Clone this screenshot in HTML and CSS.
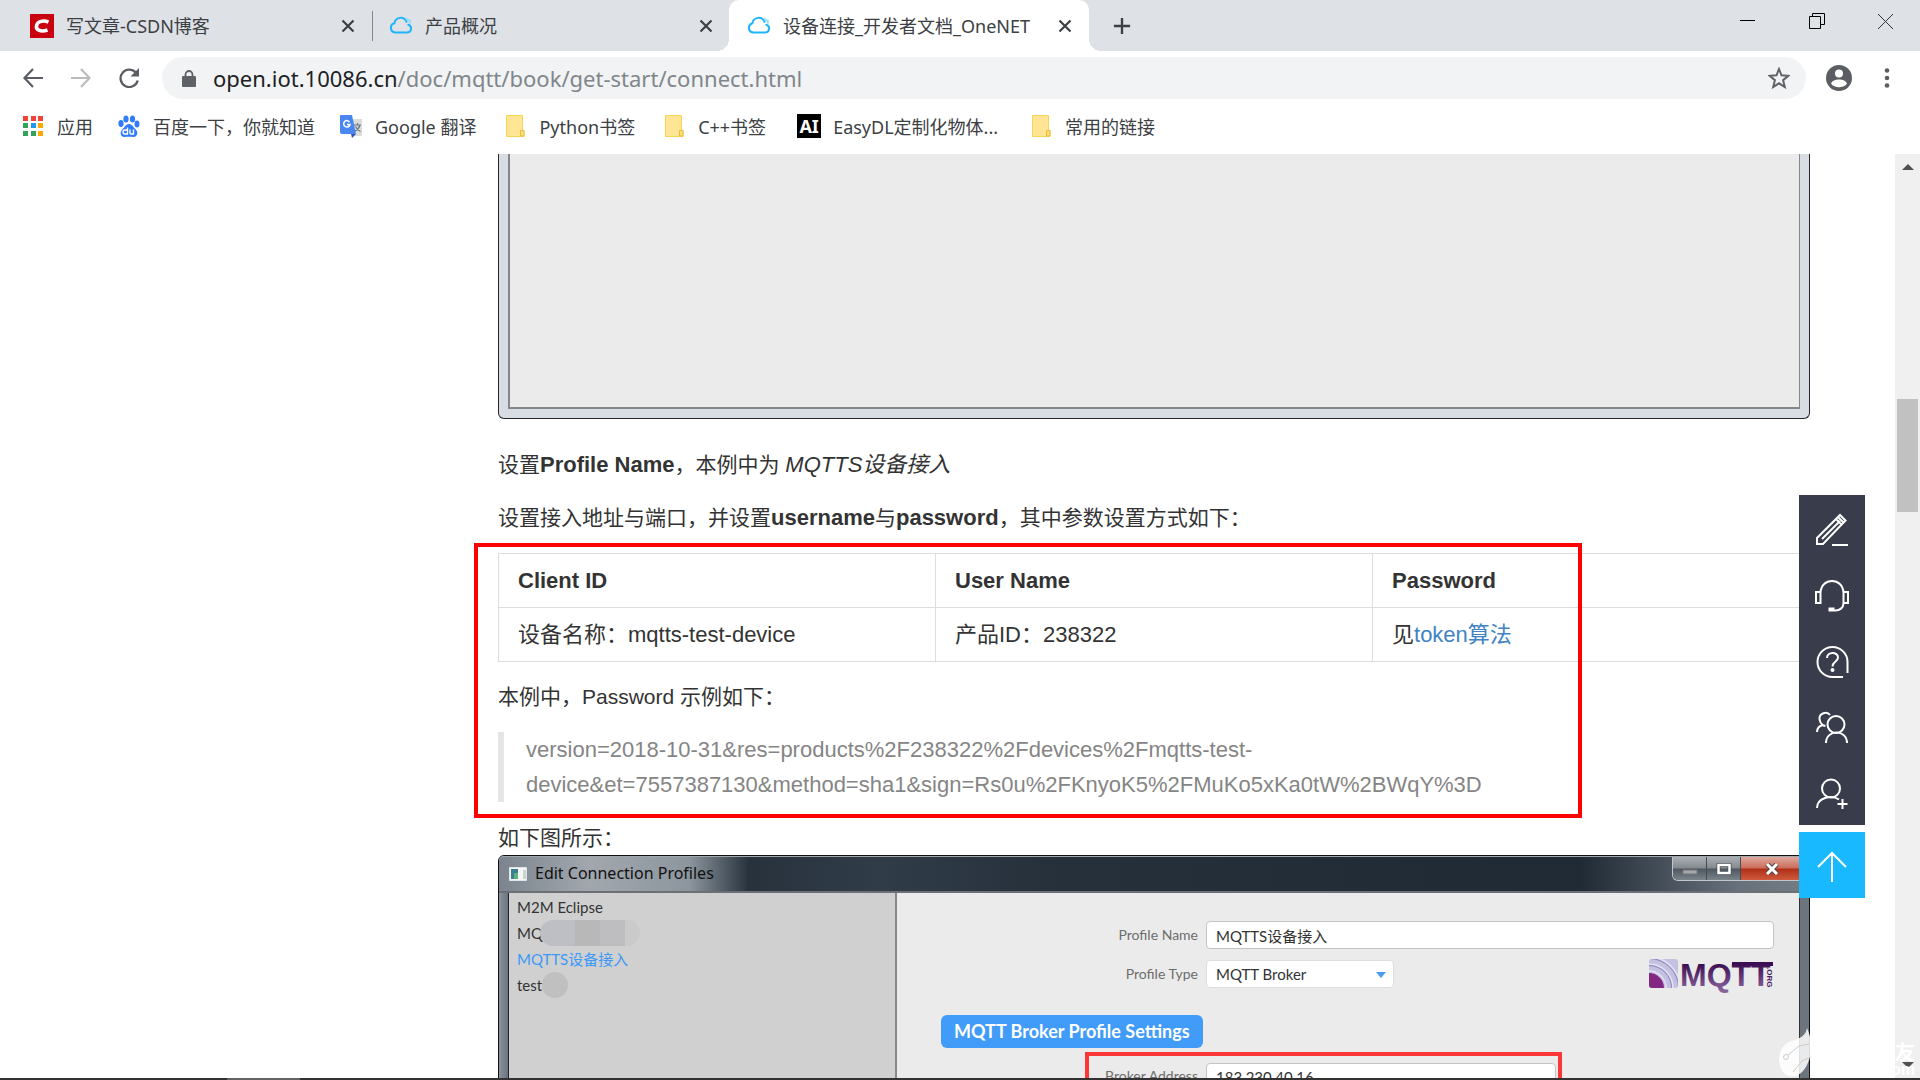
FILE: index.html
```html
<!DOCTYPE html>
<html lang="zh-CN">
<head>
<meta charset="utf-8">
<title>设备连接_开发者文档_OneNET</title>
<link rel="stylesheet" href="styles.css">
</head>
<body>
<svg class="defs" width="0" height="0" aria-hidden="true">
  <symbol id="cloud" viewBox="0 0 24 18"><path d="M6 16.500a4.700 4.700 0 0 1-.6-9.200 6.300 6.300 0 0 1 12.100-1.500M6 16.500h12.500a4 4 0 0 0 .8-7.800" fill="none" stroke="#1fb5f8" stroke-width="2" stroke-linecap="round"/><path d="M17 2.500l2.500 2M20.500 3.500l.5 4" stroke="#8fdcff" stroke-width="2"/></symbol>
  <symbol id="cross" viewBox="0 0 20 20"><path d="M4.500 4.500l11 11M15.500 4.500l-11 11" stroke="#3c4043" stroke-width="2.200"/></symbol>
  <symbol id="folder" viewBox="0 0 24 24"><path d="M3.500 1.500h16v15h1.500v6H3.500z" fill="#ffe594" stroke="#f7d455"/><path d="M17.500 22v-5.500h3.500V22z" fill="#ffe07a" stroke="#e9bd3a"/></symbol>
</svg>

<header class="browser">
  <nav class="tabs" aria-label="标签页">
    <div class="tab tab-first">
      <svg class="favicon" viewBox="0 0 24 24"><path fill="#c8000f" d="M0 0h24v24H0z"/><path d="M18.500 8.200c-5-2.400-11-1-12 3.500-.8 4.600 4.500 6.500 11 4.300" fill="none" stroke="#fff" stroke-width="3.600"/></svg>
      <span class="tab-title">写文章-CSDN博客</span>
      <button class="tab-close" aria-label="关闭"><svg><use href="#cross"/></svg></button>
    </div>
    <div class="tab tab-second">
      <svg class="favicon" viewBox="0 0 24 24"><use href="#cloud" width="24" height="18" y="2"/></svg>
      <span class="tab-title">产品概况</span>
      <button class="tab-close" aria-label="关闭"><svg><use href="#cross"/></svg></button>
    </div>
    <div class="tab tab-active">
      <svg class="favicon" viewBox="0 0 24 24"><use href="#cloud" width="24" height="18" y="2"/></svg>
      <span class="tab-title">设备连接_开发者文档_OneNET</span>
      <button class="tab-close" aria-label="关闭"><svg><use href="#cross"/></svg></button>
    </div>
    <button class="new-tab" aria-label="新标签页"><svg viewBox="0 0 20 20"><path d="M10 1v18M1 10h18" stroke="#3c4043" stroke-width="2.600"/></svg></button>
    <div class="window-buttons">
      <button aria-label="最小化"><svg viewBox="0 0 16 16"><path d="M0 7.500h15" stroke="#000"/></svg></button>
      <button aria-label="还原"><svg viewBox="0 0 16 16"><path d="M.5 3.500h11v12H.5zM3.500 3.500v-3h12v11h-4" fill="none" stroke="#000"/></svg></button>
      <button aria-label="关闭窗口"><svg viewBox="0 0 16 16"><path d="M0 1l15 15M15 1L0 16" stroke="#333"/></svg></button>
    </div>
  </nav>

  <div class="toolbar">
    <button class="nav-button" aria-label="后退"><svg viewBox="0 0 20 20"><path d="M20 10H2M10 1L1.500 10l8.500 9" fill="none" stroke="#5a5e63" stroke-width="2.200"/></svg></button>
    <button class="nav-button" aria-label="前进"><svg viewBox="0 0 20 20"><path d="M0 10h18M10 1l8.500 9-8.500 9" fill="none" stroke="#babcbe" stroke-width="2.200"/></svg></button>
    <button class="nav-button" aria-label="刷新"><svg viewBox="0 0 20 20"><path d="M17.500 5.500a8.700 8.700 0 1 0 1.200 7" fill="none" stroke="#5a5e63" stroke-width="2.300"/><path d="M20 0v8.500h-8.500z" fill="#5a5e63"/></svg></button>
    <div class="omnibox">
      <svg class="lock" viewBox="0 0 14 17"><path d="M1 6h12q1 0 1 1v9q0 1-1 1H1q-1 0-1-1V7q0-1 1-1z" fill="#5f6368"/><path d="M3.500 7V4.500a3.500 3.500 0 0 1 7 0V7" fill="none" stroke="#5f6368" stroke-width="1.800"/></svg>
      <div class="url"><span class="url-host">open.iot.10086.cn</span>/doc/mqtt/book/get-start/connect.html</div>
      <button class="star" aria-label="收藏"><svg viewBox="0 0 22 22"><path d="M11 2l2.500 6.300 6.800.5-5.200 4.400 1.700 6.800-5.800-3.700L5.200 20l1.700-6.800L1.700 8.800l6.800-.5z" fill="none" stroke="#5f6368" stroke-width="2"/></svg></button>
    </div>
    <button class="account" aria-label="用户"><svg viewBox="0 0 26 26"><circle cx="13" cy="13" r="13" fill="#5a5e63"/><circle cx="13" cy="8.500" r="4" fill="#fff"/><path d="M5 18.500c2-5.500 14-5.500 16 0-3 5-13 5-16 0z" fill="#fff"/></svg></button>
    <button class="menu" aria-label="菜单"><svg viewBox="0 0 6 20"><g fill="#5a5e63"><circle cx="3" cy="2.500" r="2.300"/><circle cx="3" cy="10" r="2.300"/><circle cx="3" cy="17.500" r="2.300"/></g></svg></button>
  </div>

  <nav class="bookmarks" aria-label="书签">
    <a href="#apps"><svg viewBox="0 0 24 24"><path fill="#f44336" d="M2 2h5v5H2zM10 2h5v5h-5zM17 2h5v5h-5z"/><path fill="#33a457" d="M2 9h5v5H2zM2 17h5v5H2zM10 17h5v5h-5z"/><path fill="#2196f3" d="M10 9h5v5h-5z"/><path fill="#ffa800" d="M17 9h5v5h-5zM17 17h5v5h-5z"/></svg>应用</a>
    <a href="#baidu"><svg viewBox="0 0 24 24"><g fill="#2e7cf6"><ellipse cx="4" cy="9.500" rx="2.600" ry="3.400"/><ellipse cx="9" cy="5" rx="2.600" ry="3.600"/><ellipse cx="15.500" cy="5" rx="2.600" ry="3.600"/><ellipse cx="20" cy="10" rx="2.500" ry="3.400"/><path d="M12 10c3 0 4 3 6.500 5.200 3.500 3 1.500 8-2 7.800-3-.5-6-.5-9 0-3.500.2-5.500-4.500-2-7.800C8 13 9 10 12 10z"/></g><path d="M10.500 13.500v6.500H8a1.800 1.800 0 0 1 0-4h2.500M13 15.500v3.500q0 1 1 1h2.500v-4.500" fill="none" stroke="#fff" stroke-width="1.400"/></svg>百度一下，你就知道</a>
    <a href="#translate"><svg viewBox="0 0 24 24"><path d="M9 5h14v17H13z" fill="#dcdcdc"/><path d="M1 2q0-1 1-1h11l4 19H3q-2 0-2-2z" fill="#4a86f0"/><path d="M12 20h5l-4 4z" fill="#3056b0"/><path d="M10.500 8a3.200 3.200 0 1 0 .5 2.500H8" fill="none" stroke="#fff" stroke-width="1.500"/><path d="M15 11h7M18.500 9v2M21 11q-1 4-5 6M16.500 12.500q2 4 5 5" stroke="#687984" fill="none" stroke-width="1.200"/></svg>Google 翻译</a>
    <a class="bookmark-folder" href="#python"><svg><use href="#folder"/></svg>Python书签</a>
    <a class="bookmark-folder" href="#cpp"><svg><use href="#folder"/></svg>C++书签</a>
    <a class="bookmark-easydl" href="#easydl"><span class="ai-badge">AI</span>EasyDL定制化物体...</a>
    <a class="bookmark-easydl" href="#links"><svg><use href="#folder"/></svg>常用的链接</a>
  </nav>
</header>

<div class="viewport">
  <main class="article">
    <div class="window-bottom"><div class="window-bottom-pane"></div></div>

    <p>设置<strong>Profile Name</strong>，本例中为 <em>MQTTS设备接入</em></p>
    <p>设置接入地址与端口，并设置<strong>username</strong>与<strong>password</strong>，其中参数设置方式如下：</p>

    <section class="credentials">
      <table>
        <thead><tr><th scope="col">Client ID</th><th scope="col">User Name</th><th scope="col">Password</th></tr></thead>
        <tbody><tr><td>设备名称：mqtts-test-device</td><td>产品ID：238322</td><td>见<a href="#token">token算法</a></td></tr></tbody>
      </table>
      <p>本例中，Password 示例如下：</p>
      <blockquote>version=2018-10-31&amp;res=products%2F238322%2Fdevices%2Fmqtts-test-<br>device&amp;et=7557387130&amp;method=sha1&amp;sign=Rs0u%2FKnyoK5%2FMuKo5xKa0tW%2BWqY%3D</blockquote>
      <div class="highlight"></div>
    </section>

    <div class="illustration">
      <p>如下图所示：</p>
      <div class="profiles">
        <div class="titlebar">
          <svg class="title-icon" viewBox="0 0 18 14"><path fill="#f4f6f6" stroke="#dfe5e8" d="M.5.5h17v13H.5z"/><path fill="#397f92" d="M2 2h7v10H2z"/><path fill="#5fb27c" d="M5 6h4v6H5z"/><path fill="#c8d6d2" d="M14 3h3v9h-3z"/></svg>
          <span class="window-title">Edit Connection Profiles</span>
          <div class="aero-buttons">
            <button class="aero-min" aria-label="Minimize"><svg viewBox="0 0 16 12"><path d="M1 7h14v4H1z" fill="#a5a7a9" stroke="#777"/></svg></button>
            <button class="aero-max" aria-label="Maximize"><svg viewBox="0 0 16 12"><path d="M2.500 2h11v8h-11z" fill="none" stroke="#4b5058" stroke-width="4"/><path d="M2.500 2h11v8h-11z" fill="none" stroke="#fff" stroke-width="2.500"/></svg></button>
            <button class="aero-close" aria-label="Close"><svg viewBox="0 0 16 12"><path d="M3 1l10 10M13 1L3 11" stroke="#544" stroke-width="5"/><path d="M3 1l10 10M13 1L3 11" stroke="#fff" stroke-width="3"/></svg></button>
          </div>
        </div>
        <div class="profiles-body">
          <ul class="profile-list">
            <li>M2M Eclipse</li>
            <li>MQ<span class="smudge smudge-wide"></span></li>
            <li class="selected">MQTTS设备接入</li>
            <li>test<span class="smudge smudge-round"></span></li>
          </ul>
          <form class="profile-form">
            <div class="field">
              <label for="profile-name">Profile Name</label>
              <input id="profile-name" type="text" value="MQTTS设备接入">
            </div>
            <div class="field field-type">
              <label for="profile-type">Profile Type</label>
              <div class="select-wrap">
                <select id="profile-type"><option>MQTT Broker</option></select>
                <svg viewBox="0 0 10 6"><path d="M0 0h10L5 6z" fill="#4a9cf0"/></svg>
              </div>
              <svg class="mqtt-logo" viewBox="0 0 126 34">
                <defs>
                  <linearGradient id="purple" x1="0" y1="0" x2="0" y2="1"><stop offset=".2" stop-color="#3c0f52"/><stop offset=".9" stop-color="#87609a"/></linearGradient>
                  <clipPath id="tile"><rect x="1" y="2" width="29" height="29" rx="3"/></clipPath>
                </defs>
                <g clip-path="url(#tile)"><path fill="#c3c0e0" d="M0 0h30v32H0z"/><g fill="none" stroke="#e4e2f4" stroke-width="1.500"><circle cx="1" cy="31" r="17"/><circle cx="1" cy="31" r="24"/><circle cx="1" cy="31" r="31"/></g><g fill="none" stroke="#8a86bd"><circle cx="1" cy="31" r="22.500"/><circle cx="1" cy="31" r="29.500"/></g><circle cx="1" cy="31" r="15" fill="#842783"/></g>
                <path d="M84 5h41v4H84z" fill="#3c0f52"/>
                <text x="32" y="29" class="mqtt-word" fill="url(#purple)">MQTT</text>
                <text class="mqtt-org" transform="translate(119 10) rotate(90)" fill="#4b1c62">.ORG</text>
              </svg>
            </div>
            <h2>MQTT Broker Profile Settings</h2>
            <div class="field broker">
              <label for="broker-address">Broker Address</label>
              <input id="broker-address" type="text" value="183.230.40.16">
            </div>
          </form>
        </div>
      </div>
    </div>
  </main>

  <div class="scrollbar" aria-hidden="true">
    <svg class="scroll-up" viewBox="0 0 12 6"><path d="M0 6h12L6 0z" fill="#505050"/></svg>
    <div class="scroll-thumb"></div>
    <svg class="scroll-down" viewBox="0 0 12 6"><path d="M0 0h12L6 6z" fill="#505050"/></svg>
  </div>

  <aside class="floating-tools">
    <div class="tool-group">
      <button aria-label="编辑"><svg viewBox="0 0 34 34"><path d="M2 31v-6L25 2l5.500 5.500L8 31zM21 6l6 6M7 26L25 8M23 4l6 6M17 32h16" /></svg></button>
      <button aria-label="客服"><svg viewBox="0 0 34 34"><path d="M5.500 13.500C6 6 11 2 17 2s11 4 11.500 11.500M1 13h4.500v11H1zM28.500 13H33v11h-4.500zM28.500 24c0 5-4 7.500-8 7.500h-6v-2h5"/></svg></button>
      <button aria-label="帮助"><svg viewBox="0 0 34 34"><path d="M28 32H17.500A15 15 0 1 1 32.500 17v11M12 13c0-6.500 11-6.500 11-.5 0 4-5.500 4-5.500 9"/><circle cx="17.500" cy="25" r="1"/></svg></button>
      <button aria-label="社区"><svg viewBox="0 0 34 34"><circle cx="21" cy="13.500" r="8.500"/><path d="M11 32c0-14 21-14 21 0M15 4C12 0 4 2 4.500 8c0 3 1 4 3 6-3 1-5.500 3-5.500 7M7.500 14c1 .5 2 1 3 .8"/></svg></button>
      <button aria-label="注册"><svg viewBox="0 0 34 34"><circle cx="16" cy="11.500" r="9"/><path d="M2 31c0-10 14-14 22-8.500M27.500 22v10M22.500 27h10"/></svg></button>
    </div>
    <button class="to-top" aria-label="返回顶部"><svg viewBox="0 0 34 34"><path d="M17 32V3M3 17L17 3l14 14"/></svg></button>
  </aside>

  <div class="watermark" aria-hidden="true">
    <svg viewBox="0 0 34 50"><path d="M28 0c6 12 6 32-4 43-5 6-13 7-18 3-9-8-7-25 2-31 6-4 18-3 20-15z" fill="#fff" fill-opacity=".85"/><path d="M9 27L20 18l10-2M14 44l9-11 9-4" fill="none" stroke="#ccc"/><circle cx="7" cy="29" r="2.500" fill="none" stroke="#ccc"/></svg>
    <div class="watermark-text">电子发烧友<small>.com</small></div>
  </div>
</div>
<footer class="taskbar"><div class="taskbar-item"></div></footer>
</body>
</html>
```
FILE: styles.css
```css
* { box-sizing: border-box; }

body {
  margin: 0;
  height: 100vh;
  display: flex;
  flex-direction: column;
  overflow: hidden;
  background: #fff;
  color: #333;
  font-family: "Liberation Sans", "Noto Sans CJK SC", sans-serif;
  font-size: 21px;
}

button {
  border: 0;
  padding: 0;
  background: none;
  display: flex;
  align-items: center;
  justify-content: center;
}

p, ul, h2, blockquote { margin: 0; padding: 0; }
.defs { position: absolute; }

/* Browser chrome */
.browser {
  flex: none;
  font-family: "Noto Sans", "Noto Sans CJK SC", sans-serif;
  font-size: 18px;
  color: #3c4043;
}

.tabs {
  display: flex;
  height: 51px;
  background: #dee1e6;
}

.tab {
  display: flex;
  align-items: center;
  gap: 12px;
  width: 360px;
  padding: 0 14px 0 18px;
}
.tab-first { width: 372px; padding-left: 30px; }
.tab-second { width: 357px; padding: 0 13px 0 17px; position: relative; }
.tab-second::before {
  content: "";
  position: absolute;
  left: 0;
  top: 11px;
  width: 1px;
  height: 30px;
  background: #85888c;
}
.tab-active {
  position: relative;
  background: #fff;
  border-radius: 10px 10px 0 0;
}
.tab-active::before,
.tab-active::after {
  content: "";
  position: absolute;
  bottom: 0;
  width: 12px;
  height: 12px;
}
.tab-active::before {
  left: -12px;
  background: radial-gradient(circle at 0 0, transparent 12px, #fff 12px);
}
.tab-active::after {
  right: -12px;
  background: radial-gradient(circle at 100% 0, transparent 12px, #fff 12px);
}
.favicon { flex: none; width: 24px; height: 24px; }
.tab-title { flex: 1; padding-bottom: 2px; white-space: nowrap; }
.tab-close, .tab-close svg { width: 20px; height: 20px; }
.new-tab { width: 66px; }
.new-tab svg { width: 18px; height: 18px; }

.window-buttons { display: flex; margin-left: auto; }
.window-buttons button { width: 69px; height: 42px; }
.window-buttons svg { width: 16px; height: 16px; }

.toolbar {
  display: flex;
  align-items: center;
  height: 54px;
  padding: 0 20px 0 9px;
}
.nav-button { width: 48px; height: 42px; }
.nav-button svg { width: 20px; height: 20px; }
.omnibox {
  flex: 1;
  display: flex;
  align-items: center;
  height: 42px;
  margin-left: 9px;
  padding: 0 16px 0 20px;
  border-radius: 21px;
  background: #f1f3f4;
}
.lock { width: 14px; height: 17px; }
.url {
  flex: 1;
  margin-left: 17px;
  font-size: 22px;
  line-height: 30px;
  color: #80868b;
}
.url-host { color: #202124; }
.star svg { width: 22px; height: 22px; }
.account { margin-left: 20px; }
.account svg { width: 26px; height: 26px; }
.menu { width: 26px; margin-left: 22px; }
.menu svg { width: 6px; height: 20px; }

.bookmarks {
  display: flex;
  align-items: center;
  gap: 24px;
  height: 49px;
  padding: 0 21px 7px;
}
.bookmarks a {
  display: flex;
  align-items: center;
  gap: 12px;
  color: inherit;
  text-decoration: none;
  white-space: nowrap;
}
.bookmarks svg { width: 24px; height: 24px; }
.bookmark-folder { margin-left: 3px; }
.bookmark-easydl { margin-left: 7px; }
.ai-badge {
  width: 24px;
  background: #000;
  color: #fff;
  font-weight: 700;
  line-height: 24px;
  text-align: center;
}

/* Page */
.viewport {
  flex: 1;
  min-height: 0;
  position: relative;
  display: flex;
  overflow: hidden;
}

.article {
  flex: 1;
  min-width: 0;
  display: flex;
  flex-direction: column;
  gap: 18px;
  padding: 0 85px 0 498px;
  line-height: 35px;
}
.article strong, .article em { font-size: 22px; line-height: 30px; }

.window-bottom {
  flex: none;
  height: 265px;
  margin-bottom: 10px;
  padding: 0 9px 9px;
  border: solid #25252b;
  border-width: 0 1px 1px;
  border-radius: 0 0 6px 6px;
  background: #d8dce3;
}
.window-bottom-pane {
  height: 100%;
  border: solid #85868a;
  border-width: 0 1px 2px 2px;
  background: #ebebeb;
}

.credentials {
  position: relative;
  display: flex;
  flex-direction: column;
  gap: 18px;
}
table {
  width: 100%;
  margin-bottom: -1px;
  table-layout: fixed;
  border-collapse: collapse;
}
th, td {
  height: 54px;
  padding: 0 19px;
  border: 1px solid #ddd;
  font-size: 22px;
  text-align: left;
}
td a { color: #4183c4; text-decoration: none; }
blockquote {
  padding-left: 22px;
  border-left: 6px solid #e5e5e5;
  color: #858585;
  font-size: 22px;
}
.highlight {
  position: absolute;
  inset: -10px 228px -16px -24px;
  border: 4px solid #f00;
}

/* Profile editor window */
.profiles {
  height: 400px;
  padding: 0 9px;
  border: 1px solid #111;
  border-radius: 6px 6px 0 0;
  background: linear-gradient(90deg, #8b949d, #69737e 9px, #6c747d);
  font-family: Lato, "Noto Sans CJK SC", sans-serif;
  font-size: 15px;
  line-height: 26px;
}
.titlebar {
  display: flex;
  align-items: center;
  height: 37px;
  margin: 0 -9px;
  padding-left: 10px;
  border-top: 1px solid #a1a7ab;
  border-bottom: 2px solid #6b7076;
  border-radius: 5px 5px 0 0;
  background: linear-gradient(90deg, #7b848e 0, #a1a7ad 90px, #8d969e 190px, #27323d 250px, #303c48 380px, #25303b 560px, #202a34 1080px, #68717b 1240px, #747c85);
}
.title-icon { width: 18px; height: 14px; }
.window-title {
  flex: 1;
  margin-left: 8px;
  padding-bottom: 2px;
  color: #111;
  font-family: "Noto Sans", sans-serif;
  font-size: 16px;
}
.aero-buttons {
  display: flex;
  align-self: flex-start;
  margin-right: 5px;
  border: 1px solid #c2c5c9;
  border-top: 0;
  border-radius: 0 0 6px 6px;
  overflow: hidden;
}
.aero-buttons button {
  width: 34px;
  height: 23px;
  border-right: 1px solid #444b53;
  background: linear-gradient(#aab0b5, #84898e 48%, #4e565f 52%, #7b838b);
}
.aero-buttons .aero-close {
  width: 62px;
  border: 0;
  background: linear-gradient(#dfa99d, #cb6c5b 48%, #b02f18 52%, #cf5a3c);
}
.aero-buttons svg { width: 16px; height: 12px; }

.profiles-body {
  display: flex;
  height: 100%;
  border-left: 1px solid #222;
  border-right: 1px solid #333;
  background: #ebebeb;
}
.profile-list {
  width: 388px;
  padding: 1px 8px;
  border-right: 2px solid #888;
  background: #d0d0d0;
  list-style: none;
}
.profile-list li { display: flex; align-items: center; }
.profile-list .selected { color: #3d99f7; }
.smudge { background: #c0c0c0; }
.smudge-wide {
  width: 100px;
  height: 26px;
  margin: 0 -3px;
  border-radius: 13px;
  background: linear-gradient(90deg, #bdbfc4 35%, #b9b8b8 35% 60%, #bebec1 60% 85%, #cacaca 85%);
}
.smudge-round { width: 26px; height: 26px; border-radius: 50%; }

.profile-form {
  flex: 1;
  display: flex;
  flex-direction: column;
  align-items: flex-start;
  padding: 28px 25px 0 44px;
}
.field { display: flex; align-items: center; width: 100%; height: 28px; }
.field label {
  width: 257px;
  margin-right: 8px;
  color: #6d6d6d;
  font-size: 14px;
  text-align: right;
}
.field input, .field select {
  flex: 1;
  height: 28px;
  padding: 0 9px;
  border: 1px solid #c4c4c4;
  border-radius: 4px;
  background: #fff;
  color: #333;
  font: inherit;
}
.field-type { margin-top: 11px; }
.select-wrap { position: relative; display: flex; width: 188px; }
.field select { appearance: none; border-color: #ddd; }
.select-wrap svg {
  position: absolute;
  right: 8px;
  top: 12px;
  width: 10px;
  height: 6px;
}
.mqtt-logo { width: 126px; height: 34px; margin-left: auto; overflow: visible; }
.mqtt-word { font: bold 32px "Liberation Sans", sans-serif; }
.mqtt-org { font: bold 8px "Liberation Sans", sans-serif; }
h2 {
  margin: 27px 0 4px;
  padding: 0 13px;
  border-radius: 6px;
  background: #419bf9;
  color: #fff;
  font-size: 18px;
  line-height: 33px;
}
.field.broker {
  align-self: flex-start;
  align-items: flex-start;
  width: 477px;
  height: 80px;
  margin-left: 144px;
  padding: 7px 2px 0 0;
  border: 4px solid #fb3737;
}
.broker label { width: 109px; }

/* Scrollbar */
.scrollbar {
  flex: none;
  width: 25px;
  display: flex;
  flex-direction: column;
  align-items: center;
  padding: 10px 0;
  background: #f0f0f0;
}
.scrollbar svg { width: 12px; height: 6px; }
.scroll-thumb {
  width: 21px;
  height: 113px;
  margin: 229px 0 auto;
  background: #c1c1c1;
}

/* Tools floating over the article */
.floating-tools {
  position: absolute;
  top: 341px;
  right: 55px;
  display: flex;
  flex-direction: column;
  gap: 7px;
}
.tool-group { background: #393d4b; }
.floating-tools button { width: 66px; height: 66px; padding-top: 4px; }
.floating-tools svg {
  width: 34px;
  height: 34px;
  fill: none;
  stroke: #fff;
  stroke-width: 2;
}
.floating-tools .to-top { background: #19b9ff; }

.watermark {
  position: absolute;
  right: 0;
  bottom: 0;
  display: flex;
  align-items: flex-end;
  width: 141px;
  color: #fff;
}
.watermark svg { flex: none; width: 34px; height: 50px; }
.watermark-text {
  flex: 1;
  padding-right: 5px;
  font-size: 20px;
  font-weight: 700;
  line-height: 17px;
  text-align: right;
  white-space: nowrap;
}
.watermark-text small { display: block; font-size: 16px; line-height: 16px; }

.taskbar { flex: none; height: 2px; background: #343132; }
.taskbar-item { width: 73px; height: 2px; margin-left: 227px; background: #656263; }
```
